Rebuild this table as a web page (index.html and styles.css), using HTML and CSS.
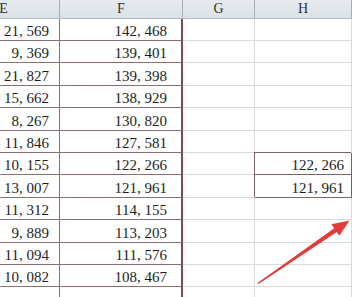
FILE: index.html
```html
<!DOCTYPE html>
<html>
<head>
<meta charset="utf-8">
<link rel="stylesheet" href="styles.css">
</head>
<body>
<div class="page">
  <div class="sheet">
    <div class="hd">E</div><div class="hd">F</div><div class="hd">G</div><div class="hd hd-last">H</div>

    <div class="c ce">21, 569</div><div class="c cf">142, 468</div><div class="c cg"></div><div class="c ch"></div>
    <div class="c ce">9, 369</div><div class="c cf">139, 401</div><div class="c cg"></div><div class="c ch"></div>
    <div class="c ce">21, 827</div><div class="c cf">139, 398</div><div class="c cg"></div><div class="c ch"></div>
    <div class="c ce">15, 662</div><div class="c cf">138, 929</div><div class="c cg"></div><div class="c ch"></div>
    <div class="c ce">8, 267</div><div class="c cf">130, 820</div><div class="c cg"></div><div class="c ch"></div>
    <div class="c ce">11, 846</div><div class="c cf">127, 581</div><div class="c cg"></div><div class="c ch"></div>
    <div class="c ce">10, 155</div><div class="c cf">122, 266</div><div class="c cg"></div><div class="c ch hl">122, 266</div>
    <div class="c ce">13, 007</div><div class="c cf">121, 961</div><div class="c cg"></div><div class="c ch hl">121, 961</div>
    <div class="c ce">11, 312</div><div class="c cf">114, 155</div><div class="c cg"></div><div class="c ch"></div>
    <div class="c ce">9, 889</div><div class="c cf">113, 203</div><div class="c cg"></div><div class="c ch"></div>
    <div class="c ce">11, 094</div><div class="c cf">111, 576</div><div class="c cg"></div><div class="c ch"></div>
    <div class="c ce">10, 082</div><div class="c cf">108, 467</div><div class="c cg"></div><div class="c ch"></div>
    <div class="c ce"></div><div class="c cf"></div><div class="c cg"></div><div class="c ch"></div>
  </div>

  <svg class="arrow" width="352" height="297" viewBox="0 0 352 297" xmlns="http://www.w3.org/2000/svg">
    <polygon points="257.5,283 334.2,228.3 331.5,224.2 349.5,220.5 339.3,235.8 336.8,232.1 258.5,284" fill="#e23b3b"/>
  </svg>
</div>
</body>
</html>
```
FILE: styles.css
```css
html, body {
  margin: 0;
  padding: 0;
  background: #ffffff;
}

.page {
  position: relative;
  width: 352px;
  height: 297px;
  overflow: hidden;
}

.sheet {
  display: grid;
  grid-template-columns: 112px 123px 72px 97px;
  grid-template-rows: 18.6px;
  grid-auto-rows: 22.4px;
  margin-left: -52px;
  width: 404px;
  font-family: "Liberation Serif", serif;
}

.hd {
  box-sizing: border-box;
  background: linear-gradient(#e7ebf0, #dce1e7);
  border-right: 1px solid #a9aeb5;
  border-bottom: 1px solid #b4b9c0;
  color: #333;
  font-size: 14px;
  display: flex;
  align-items: center;
  justify-content: center;
  padding-top: 1px;
}

.c {
  box-sizing: border-box;
  border-right: 1px solid #d8d9da;
  border-bottom: 1px solid #d8d9da;
  font-size: 15px;
  line-height: 16px;
  color: #1e1e1e;
  display: flex;
  align-items: flex-end;
  justify-content: flex-end;
  padding-bottom: 1px;
  white-space: nowrap;
}

.ce {
  border-right-color: #8a7070;
  border-bottom-color: #8a7070;
  padding-right: 10px;
}

.cf {
  border-right: 2px solid #6e5353;
  border-bottom-color: #8a7070;
  padding-right: 14px;
  box-shadow: 3px 0 4px -2px rgba(220, 120, 120, 0.18);
}

.ch {
  padding-right: 7px;
}

.hl {
  border-right-color: #7d6262;
  border-bottom-color: #7d6262;
  box-shadow: -1px -1px 0 #7d6262;
}

.arrow {
  position: absolute;
  left: 0;
  top: 0;
}
```
